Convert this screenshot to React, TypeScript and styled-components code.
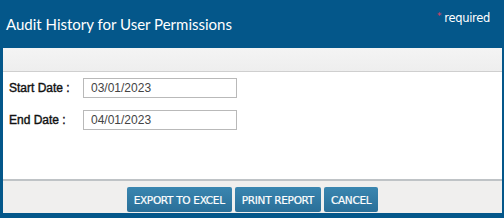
import React from 'react';
import styled, { createGlobalStyle } from 'styled-components';

const GlobalStyle = createGlobalStyle`
  html, body {
    margin: 0;
    padding: 0;
    background: #ffffff;
  }
`;

const Dialog = styled.div`
  width: 504px;
  height: 218px;
  box-sizing: border-box;
  display: flex;
  flex-direction: column;
  background: #04578a;
  padding: 0 2px 5px 3px;
`;

const Header = styled.div`
  height: 46px;
  display: flex;
  align-items: center;
  justify-content: space-between;
  padding: 0 12px 2px 3px;
  flex-shrink: 0;
`;

const Title = styled.h1`
  margin: 0;
  font-family: Lato, 'Open Sans', sans-serif;
  font-weight: 400;
  font-size: 15px;
  color: #ffffff;
  margin-top: 1px;
`;

const Required = styled.span`
  font-family: 'DejaVu Sans', Verdana, sans-serif;
  font-size: 11.5px;
  color: #ffffff;
  letter-spacing: -0.3px;
  align-self: flex-start;
  margin-top: 11px;
`;

const Star = styled.span`
  color: #e04060;
  font-size: 9px;
  margin-right: 3px;
  vertical-align: 3px;
`;

const Band = styled.div`
  height: 23px;
  background: linear-gradient(#f4f4f4, #eeeeee);
  border-bottom: 1px solid #cfcfcf;
  flex-shrink: 0;
`;

const Body = styled.div`
  flex: 1;
  background: #ffffff;
  padding: 6px 6px 0;
  display: flex;
  flex-direction: column;
  gap: 12px;
`;

const Row = styled.div`
  display: flex;
  align-items: center;
`;

const Label = styled.label`
  width: 74px;
  font-family: 'Liberation Sans', Arial, sans-serif;
  font-size: 12px;
  color: #111111;
  -webkit-text-stroke: 0.4px #111;
`;

const Input = styled.input`
  width: 154px;
  height: 20px;
  box-sizing: border-box;
  border: 1px solid #b9b9b9;
  padding: 0 7px;
  font-family: 'Liberation Sans', Arial, sans-serif;
  font-size: 12px;
  color: #444444;
  outline: none;
`;

const Footer = styled.div`
  height: 31px;
  border-top: 2px solid #bfc3c6;
  background: #f0efee;
  display: flex;
  justify-content: center;
  align-items: flex-end;
  gap: 3px;
  padding: 0 0 1px 0;
  box-sizing: content-box;
  flex-shrink: 0;
`;

const Button = styled.button`
  height: 25px;
  padding: 0 7px;
  border: none;
  border-radius: 2px;
  background: linear-gradient(#3a86b0, #2a6f98);
  color: #ffffff;
  font-family: 'DejaVu Sans', Verdana, sans-serif;
  font-size: 10.5px;
  letter-spacing: -0.3px;
  -webkit-text-stroke: 0.2px #fff;
  cursor: pointer;
`;

export default function App() {
  return (
    <>
      <GlobalStyle />
      <Dialog>
        <Header>
          <Title>Audit History for User Permissions</Title>
          <Required>
            <Star>*</Star>required
          </Required>
        </Header>
        <Band />
        <Body>
          <Row>
            <Label>Start Date :</Label>
            <Input defaultValue="03/01/2023" />
          </Row>
          <Row>
            <Label>End Date :</Label>
            <Input defaultValue="04/01/2023" />
          </Row>
        </Body>
        <Footer>
          <Button>EXPORT TO EXCEL</Button>
          <Button>PRINT REPORT</Button>
          <Button>CANCEL</Button>
        </Footer>
      </Dialog>
    </>
  );
}
